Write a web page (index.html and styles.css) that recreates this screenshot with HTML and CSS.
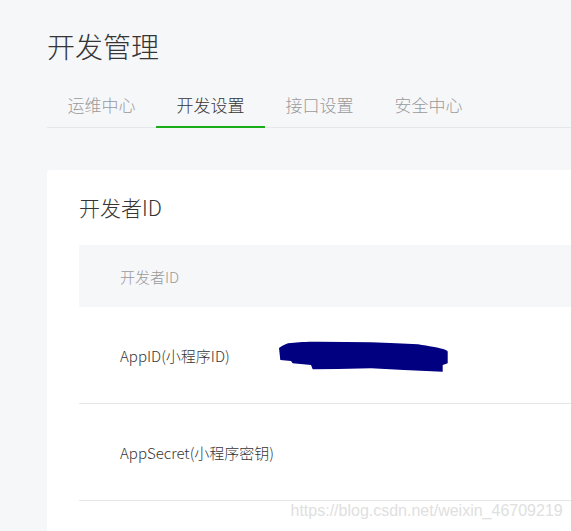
FILE: index.html
```html
<!DOCTYPE html>
<html lang="zh-CN">
<head>
<meta charset="utf-8">
<title>开发管理</title>
<link rel="stylesheet" href="styles.css">
</head>
<body>
<div class="page">
  <h1 class="title">开发管理</h1>
  <nav class="tabs">
    <a class="tab">运维中心</a>
    <a class="tab active">开发设置</a>
    <a class="tab">接口设置</a>
    <a class="tab">安全中心</a>
  </nav>
  <section class="card">
    <h2 class="card-title">开发者ID</h2>
    <div class="table">
      <div class="thead">开发者ID</div>
      <div class="row">
        <span class="label">AppID(小程序ID)</span>
        <svg class="redact" width="170" height="32" viewBox="0 0 170 32">
          <path d="M0 7 C4 4 8 2 12 2 C20 1 25 0.7 40 0.7 L92 1.3 C110 2 125 2.5 139 3.3 C150 5 160 7 162 7.5 C168 9 168.7 10 168.7 10.7 L168.7 22.3 L163.7 24 L163.7 30.7 L125 29 L92 27.3 L58.7 28 L33.7 28.3 L32 24 L13.7 22.3 L12 20 L1.3 19 Z" fill="#000080"/>
        </svg>
      </div>
      <div class="row">
        <span class="label">AppSecret(小程序密钥)</span>
      </div>
    </div>
    <div class="watermark">https://blog.csdn.net/weixin_46709219</div>
  </section>
</div>
</body>
</html>
```

FILE: styles.css
```css
html, body {
  margin: 0;
  padding: 0;
  background: #f6f7f9;
  font-family: "Noto Sans CJK SC", "Noto Sans", sans-serif;
  font-weight: 300;
  color: #353535;
}

.page {
  padding: 28px 0 0 47px;
}

.title {
  margin: 0 0 20px 0;
  font-size: 28px;
  line-height: 36px;
  font-weight: 300;
  color: #353535;
}

.tabs {
  display: flex;
  border-bottom: 1px solid #e4e8eb;
}

.tab {
  padding: 0 20.5px;
  text-align: center;
  font-size: 17px;
  line-height: 42px;
  color: #9a9a9a;
  border-bottom: 2px solid transparent;
  margin-bottom: -1px;
  cursor: pointer;
}

.tab.active {
  color: #353535;
  border-bottom-color: #1aad19;
}

.card {
  position: relative;
  margin: 42px 0 0 0;
  background: #ffffff;
  border-radius: 4px 0 0 4px;
  padding: 23px 0 40px 32px;
}

.card-title {
  margin: 0 0 23px 0;
  font-size: 21px;
  line-height: 29px;
  font-weight: 300;
  color: #353535;
}

.thead {
  height: 62px;
  display: flex;
  align-items: center;
  padding-left: 41px;
  background: #f6f7f9;
  font-size: 15px;
  color: #9a9a9a;
}

.row {
  height: 96px;
  display: flex;
  align-items: center;
  padding-left: 41px;
  border-bottom: 1px solid #e7e7eb;
  font-size: 15px;
  color: #353535;
}

.label {
  width: 158.5px;
  flex-shrink: 0;
}

.redact {
  display: block;
  margin-top: 3px;
}

.watermark {
  position: absolute;
  left: 243.5px;
  top: 332px;
  font-family: "Liberation Sans", Arial, sans-serif;
  font-weight: 400;
  font-size: 16px;
  color: #e0e0e0;
  white-space: nowrap;
}
```
